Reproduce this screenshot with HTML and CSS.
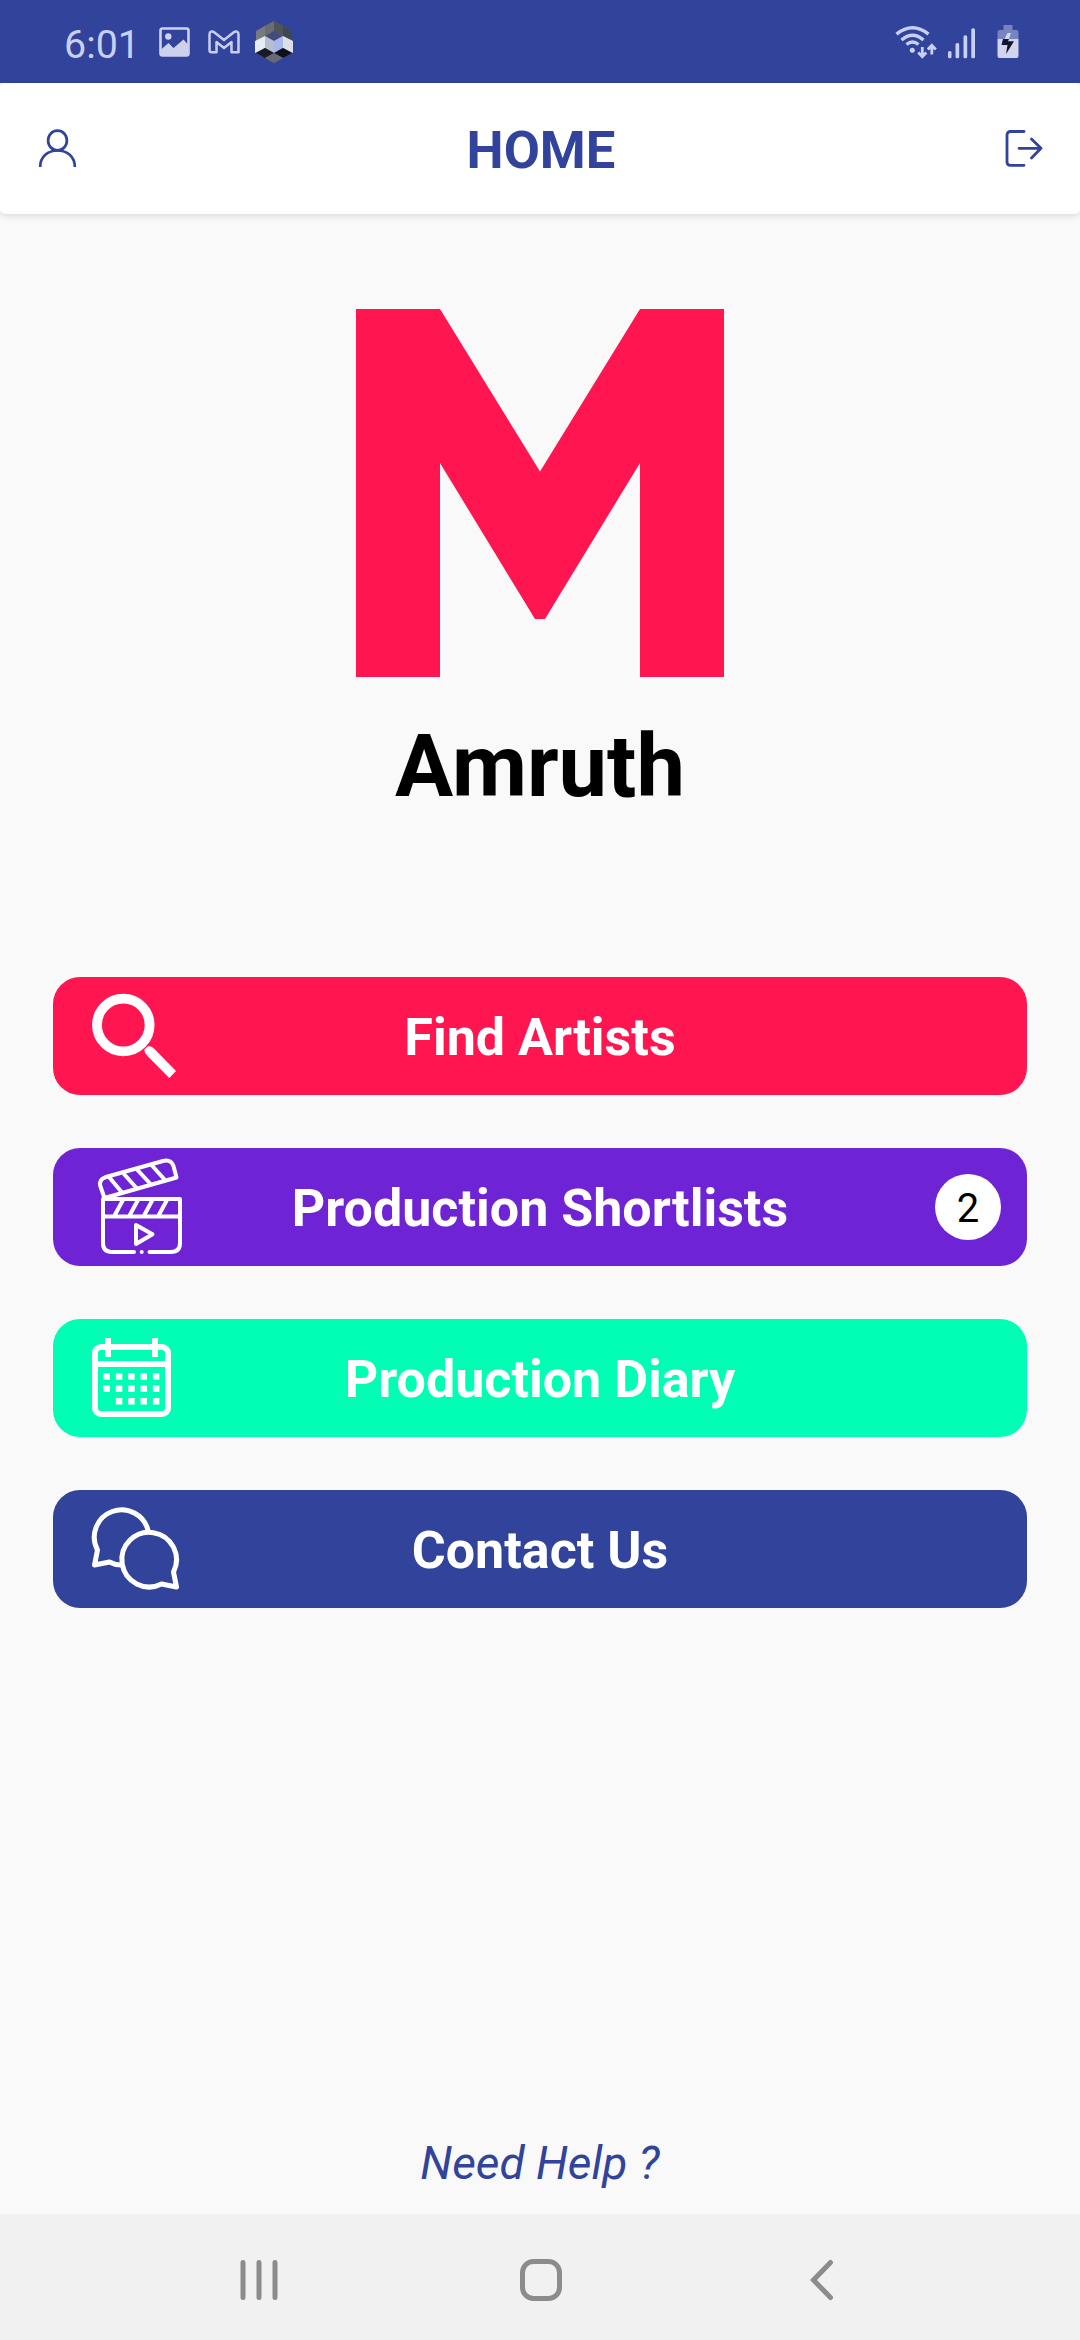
FILE: index.html
```html
<!DOCTYPE html>
<html lang="en">
<head>
    <meta charset="UTF-8" />
    <meta name="viewport" content="width=device-width, initial-scale=1" />
    <title>Home</title>
    <link rel="stylesheet" href="styles.css">
</head>
<body>
    <div class="status-bar">
        <div class="status-left">
            <span class="time">6:01</span>
            <svg class="icon-photo" width="31" height="30" viewBox="0 0 31 30">
                <rect x="1.5" y="1.5" width="28" height="27" rx="2" fill="none" stroke="#cdd1ec" stroke-width="2.6"/>
                <circle cx="9.3" cy="9.5" r="3.2" fill="#cdd1ec"/>
                <path d="M2 22.500L9.500 16L14.500 21L24.500 12.500L29 17.500V28H2z" fill="#cdd1ec"/>
            </svg>
            <svg class="icon-mail" width="32" height="24" viewBox="0 0 32 24">
                <path d="M1.500 4.200C1.500 1.400 4.300 0.800 6.200 2.300L16 10L25.800 2.300C27.700 0.800 30.500 1.400 30.500 4.200V22.300H23.500V12L16 18L8.500 12V22.300H3.500Q1.500 22.300 1.500 20.300z" fill="none" stroke="#c9ceee" stroke-width="2.5" stroke-linejoin="round"/>
            </svg>
            <svg class="icon-hex" width="38" height="43" viewBox="0 0 38 43">
                <path d="M19 0L37 10V32L19 42L1 32V10z" fill="#5b6070"/>
                <path d="M10 5L19 0V10L10 15z" fill="#6a6c72"/>
                <path d="M19 0L28 5V15L19 10z" fill="#50535a"/>
                <path d="M1 10L10 5V15L1 20z" fill="#777a80"/>
                <path d="M28 5L37 10V20L28 15z" fill="#404653"/>
                <path d="M19 10L27 15L19 20L11 15z" fill="#414b80"/>
                <path d="M0 20L10 15V27L0 32z" fill="#e9ebf2"/>
                <path d="M10 15L19 20V32L10 27z" fill="#b9bdd0"/>
                <path d="M19 20L28 15V27L19 32z" fill="#a9b8ea"/>
                <path d="M28 15L38 20V32L28 27z" fill="#dcdfea"/>
                <path d="M1 32L10 27L19 32L10 37z" fill="#171c27"/>
                <path d="M19 32L28 27L37 32L28 37z" fill="#0d1119"/>
                <path d="M10 37L19 32L28 37L19 42z" fill="#666a75"/>
            </svg>
        </div>
        <div class="status-right">
            <svg width="43" height="34" viewBox="893 25 43 34" fill="none" stroke="#c9d0f6">
                <path d="M895.500 34.200Q911.500 21.500 927.500 34.200M900.500 40Q911.500 30.500 922.500 40M905.500 44.500Q911.500 39.500 917.500 44.500" stroke-width="3.4"/>
                <circle cx="911.300" cy="50.300" r="2.500" fill="#c9d0f6" stroke="none"/>
                <path d="M921.300 47V56.500M917.300 52.500L921.300 56.700L925.300 52.500M930.800 54.500V46M926.800 49.500L930.800 45.300L934.800 49.500" stroke-width="2.8"/>
            </svg>
            <svg class="icon-signal" width="28" height="31" viewBox="947 28 28 31" fill="#c9d0f6">
                <rect x="947" y="51" width="3.500" height="7.300" rx="1.500"/>
                <rect x="954.500" y="43" width="3.700" height="15.300" rx="1.500"/>
                <rect x="962.500" y="35.300" width="3.700" height="23" rx="1.500"/>
                <rect x="970.300" y="28.300" width="3.700" height="30" rx="1.500"/>
            </svg>
            <svg class="icon-battery" width="22" height="34" viewBox="995.500 26 22 34">
                <path d="M1002 26H1011V31H1015Q1017 31 1017 33V40H996V33Q996 31 998 31H1002z" fill="#7884c2"/>
                <path d="M996 40H1017V57Q1017 59 1015 59H998Q996 59 996 57z" fill="#d0d4ec"/>
                <path d="M1006 34H1009.500L1007.500 40H1003z" fill="#d0d4ec"/>
                <path d="M1001.500 40H1007.500L1006.500 42.300H1012.500L1004.500 55L1006 46H1000z" fill="#11162b"/>
            </svg>
        </div>
    </div>

    <div class="header">
        <svg width="39" height="38" viewBox="0 0 39 38" fill="none" stroke="#31439b" stroke-width="2.7">
            <ellipse cx="19.500" cy="11.500" rx="9.400" ry="9.900"/>
            <path d="M2.200 38C2.200 27.500 10 21.500 19.500 21.500S36.800 27.500 36.800 38"/>
        </svg>
        <h1>HOME</h1>
        <svg width="38" height="38" viewBox="0 0 38 38" fill="none" stroke="#31439b" stroke-width="2.8" stroke-linecap="round" stroke-linejoin="round">
            <path d="M19 2.500H5.500Q2 2.500 2 6V33Q2 36.300 5.500 36.300H19M14 19.300H36M26.500 10L36 19.300L26.500 29"/>
        </svg>
    </div>

    <div class="content">
        <svg class="logo" width="368" height="368" viewBox="0 0 368 368" fill="#ff1650">
            <rect x="0" y="0" width="84" height="368"/>
            <rect x="284" y="0" width="84" height="368"/>
            <path d="M83.500 0H84L184 162.500L284 0H284.500V154H284L189 310H179L84 154H83.500z"/>
        </svg>
        <h2>Amruth</h2>

        <div class="menu">
            <a class="menu-item find">
                <svg class="menu-icon" width="110" height="118" viewBox="53 977 110 118">
                    <circle cx="123.300" cy="1025" r="26.300" fill="none" stroke="#fff" stroke-width="9.800"/>
                    <path d="M144.500 1049.500L147.500 1046.500Q151 1045.500 154 1048.500L176 1071L169.300 1078L147.500 1056Q144 1052 144.500 1049.500z" fill="#fff"/>
                </svg>
                <span>Find Artists</span>
            </a>
            <a class="menu-item shortlists">
                <svg class="menu-icon" width="110" height="118" viewBox="53 1148 110 118" fill="none" stroke="#fff" stroke-width="4" stroke-linejoin="round">
                    <path d="M104.500 1198L100.300 1186Q98.500 1179.500 106 1177L163 1161Q171 1159 173.500 1166L176.500 1177.500z"/>
                    <path d="M109 1177L122 1192.500M123.500 1173.500L136.500 1188M137 1169.500L150.500 1184M151.500 1165L165 1180"/>
                    <path d="M134 1252H112Q103 1252 103 1243V1199H180V1243Q180 1252 171 1252H149.500" stroke-linecap="round"/>
                    <path d="M103 1216.500H180M123.500 1199L114 1216.500M138.500 1199L129 1216.500M153 1199L143.500 1216.500M167.500 1199L158 1216.500"/>
                    <path d="M136 1225V1244L152.500 1234.300z"/>
                    <circle cx="141.700" cy="1252" r="2" fill="#fff" stroke="none"/>
                </svg>
                <span>Production Shortlists</span>
                <div class="badge">2</div>
            </a>
            <a class="menu-item diary">
                <svg class="menu-icon" width="110" height="118" viewBox="53 1319 110 118">
                    <rect x="95" y="1347" width="73" height="67" rx="6" fill="none" stroke="#fff" stroke-width="6"/>
                    <path d="M95 1364H168M108 1338V1357M155 1338V1357" stroke="#fff" stroke-width="6"/>
                    <path d="M103.500 1376.500H160M103.500 1388.800H160" stroke="#fff" stroke-width="6.500" stroke-dasharray="6.500 5.850"/>
                    <path d="M115.850 1401.300H160" stroke="#fff" stroke-width="6.500" stroke-dasharray="6.500 5.850"/>
                </svg>
                <span>Production Diary</span>
            </a>
            <a class="menu-item contact">
                <svg class="menu-icon" width="110" height="118" viewBox="53 1490 110 118" fill="none" stroke="#fff" stroke-width="5" stroke-linejoin="round">
                    <path d="M148.300 1531.500A27.300 27.300 0 1 0 97.500 1550L94.500 1565L109.500 1562Q115 1565 121 1565"/>
                    <path d="M173.500 1572L176.500 1587L161.500 1584A27.300 27.300 0 1 1 173.500 1572z"/>
                </svg>
                <span>Contact Us</span>
            </a>
        </div>

        <a class="help">Need Help ?</a>
    </div>

    <div class="nav-bar">
        <svg width="40" height="42" viewBox="0 0 40 42" stroke="#8c8c8c" stroke-width="5" stroke-linecap="round">
            <path d="M4 3.500V38.500M20 3.500V38.500M36 3.500V38.500"/>
        </svg>
        <svg width="42" height="42" viewBox="0 0 42 42">
            <rect x="2.500" y="2.500" width="37" height="37" rx="11" fill="none" stroke="#8c8c8c" stroke-width="5"/>
        </svg>
        <svg class="nav-back" width="40" height="42" viewBox="0 0 40 42">
            <path d="M28.500 3.500L11.500 21L28.500 38.500" fill="none" stroke="#8c8c8c" stroke-width="5" stroke-linecap="round"/>
        </svg>
    </div>
</body>
</html>
```
FILE: styles.css
```css
* {
    box-sizing: border-box;
}
body {
    font-family: Roboto, sans-serif;
    display: flex;
    flex-direction: column;
    height: 2340px;
    margin: 0;
    background-color: #f9f9f9;
}
svg {
    display: block;
    flex-shrink: 0;
}
.status-bar {
    display: flex;
    justify-content: space-between;
    height: 83px;
    padding: 0 61px 0 64px;
    background: #31439b;
}
.status-left,
.status-right {
    display: flex;
    align-items: center;
    height: 84px;
}
.time {
    width: 95px;
    font-size: 39.4px;
    color: #c9d0f6;
    padding-top: 4px;
}
.icon-mail {
    margin-left: 18px;
}
.icon-hex {
    margin-left: 15px;
}
.icon-signal {
    margin: 2px 0 0 11px;
}
.icon-battery {
    margin-left: 21px;
}
.header {
    display: flex;
    justify-content: space-between;
    align-items: center;
    height: 131px;
    padding: 0 37px 1px 38px;
    background: white;
    border-radius: 5px;
    box-shadow: 0 2px 6px rgba(0,0,0,0.13);
}
.header h1 {
    margin: 4px 0 0;
    font-size: 52.5px;
    font-weight: 700;
    color: #31439b;
}
.content {
    display: flex;
    flex: 1;
    flex-direction: column;
    align-items: center;
    padding: 95px 53px 0;
}
.content h2 {
    margin: 39px 0 0;
    font-size: 86.6px;
    font-weight: 700;
    line-height: 102px;
    color: black;
}
.menu {
    display: flex;
    flex-direction: column;
    gap: 53px;
    width: 100%;
    margin-top: 159px;
}
.menu-item {
    display: grid;
    grid-template-columns: 110px 1fr 110px;
    align-items: center;
    height: 118px;
    border-radius: 27px;
    color: white;
    font-size: 52px;
    font-weight: 700;
    text-align: center;
}
.menu-item span {
    padding-top: 3px;
}
.menu-icon {
    overflow: visible;
}
.find {
    background: #ff1650;
}
.shortlists {
    background: #6e24d5;
}
.diary {
    background: #00ffb5;
}
.contact {
    background: #31439b;
}
.badge {
    justify-self: end;
    width: 66px;
    height: 66px;
    margin-right: 26px;
    padding-top: 2px;
    border-radius: 50%;
    background: white;
    color: black;
    font-size: 40px;
    font-weight: 400;
    line-height: 66px;
}
.help {
    margin: auto 0 23px;
    font-size: 46px;
    font-style: italic;
    line-height: 56px;
    color: #31439b;
}
.nav-bar {
    display: flex;
    justify-content: space-between;
    align-items: center;
    height: 126px;
    padding: 6px 238px 0 239px;
    background: #f1f1f1;
}
```
